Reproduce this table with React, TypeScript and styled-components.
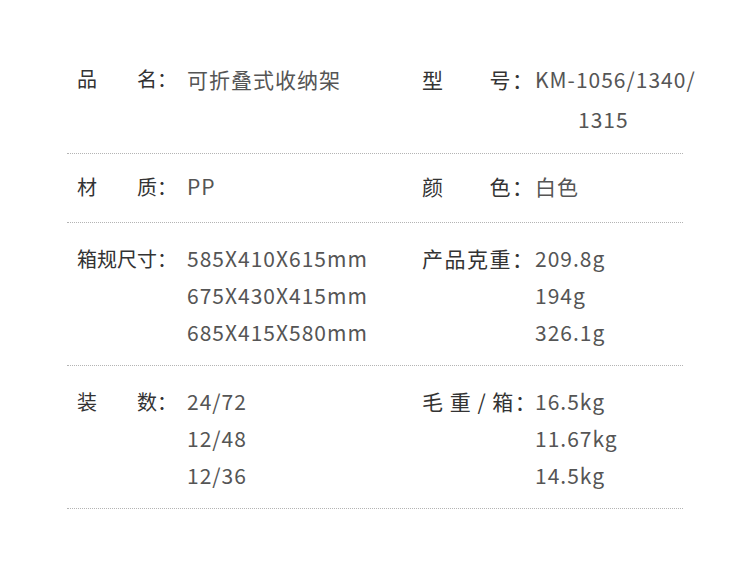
import { FC } from 'react';
import styled, { createGlobalStyle } from 'styled-components';

type Field = {
  label: string;
  values: string[];
  indent?: number;
};

type SpecRow = [Field, Field];

const specRows: SpecRow[] = [
  [
    { label: '品\u3000\u3000名：', values: ['可折叠式收纳架'] },
    { label: '型\u3000\u3000号：', values: ['KM-1056/1340/', '1315'], indent: 43 },
  ],
  [
    { label: '材\u3000\u3000质：', values: ['PP'] },
    { label: '颜\u3000\u3000色：', values: ['白色'] },
  ],
  [
    { label: '箱规尺寸：', values: ['585X410X615mm', '675X430X415mm', '685X415X580mm'] },
    { label: '产品克重：', values: ['209.8g', '194g', '326.1g'] },
  ],
  [
    { label: '装\u3000\u3000数：', values: ['24/72', '12/48', '12/36'] },
    { label: '毛 重 / 箱：', values: ['16.5kg', '11.67kg', '14.5kg'] },
  ],
];

const App: FC = () => {
  return (
    <>
      <GlobalStyle />
      <Page>
        {specRows.map((row, i) => (
          <Row
            key={i}
            $wrapped={row.some((f) => f.indent !== undefined)}
            $single={row.every((f) => f.values.length === 1)}
          >
            {row.map((field, j) => (
              <FieldBox key={j}>
                <Label $right={j === 1}>{field.label}</Label>
                <Values>
                  {field.values.map((v, k) => (
                    <Value key={k} $indent={k > 0 ? field.indent : undefined}>
                      {v}
                    </Value>
                  ))}
                </Values>
              </FieldBox>
            ))}
          </Row>
        ))}
      </Page>
    </>
  );
};

// styles
const GlobalStyle = createGlobalStyle`
  body {
    margin: 0;
    background: #fff;
    font-family: 'Noto Sans CJK SC', 'Noto Sans', sans-serif;
  }
`;

const Page = styled.div`
  width: 750px;
  box-sizing: border-box;
  padding: 42px 67px 0 67px;
`;

const Row = styled.div<{ $wrapped: boolean; $single: boolean }>`
  display: grid;
  grid-template-columns: 345px 1fr;
  padding: ${({ $single }) => ($single ? '14px 0 17px 10px' : '17px 0 14px 10px')};
  border-bottom: 1px dotted #b4b4b4;
  line-height: ${({ $wrapped }) => ($wrapped ? '40px' : '37px')};
`;

const FieldBox = styled.div`
  display: flex;
  align-items: flex-start;
`;

const Label = styled.div<{ $right: boolean }>`
  flex: none;
  white-space: pre;
  color: #333;
  font-size: ${({ $right }) => ($right ? '21px' : '20px')};
  letter-spacing: ${({ $right }) => ($right ? '1.5px' : '0')};
  word-spacing: -1px;
  width: ${({ $right }) => ($right ? '113px' : '110px')};
`;

const Values = styled.div`
  display: flex;
  flex-direction: column;
`;

const Value = styled.div<{ $indent?: number }>`
  font-size: 21px;
  letter-spacing: 1px;
  color: #555;
  white-space: nowrap;
  padding-left: ${({ $indent }) => ($indent ? `${$indent}px` : '0')};
`;

export default App;
